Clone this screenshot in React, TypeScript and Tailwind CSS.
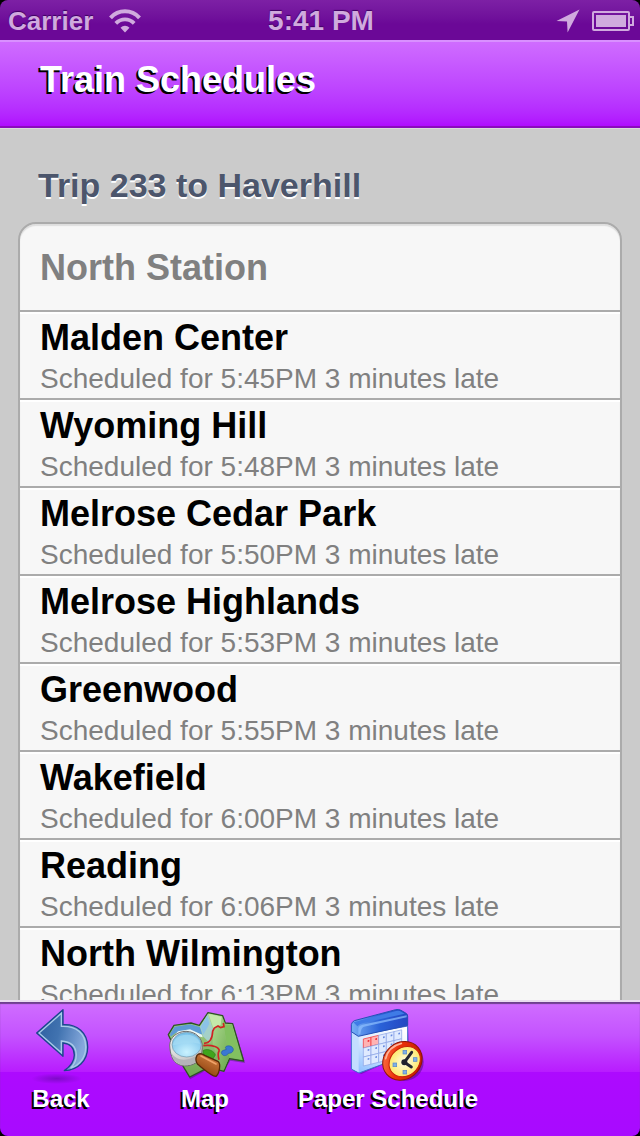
import React from "react";

type Stop = {
  name: string;
  time: string;
};

const stops: Stop[] = [
  { name: "Malden Center", time: "5:45PM" },
  { name: "Wyoming Hill", time: "5:48PM" },
  { name: "Melrose Cedar Park", time: "5:50PM" },
  { name: "Melrose Highlands", time: "5:53PM" },
  { name: "Greenwood", time: "5:55PM" },
  { name: "Wakefield", time: "6:00PM" },
  { name: "Reading", time: "6:06PM" },
  { name: "North Wilmington", time: "6:13PM" },
];

const WifiIcon = () => (
  <svg width="32" height="24" viewBox="0 0 32 24" fill="none" stroke="currentColor">
    <path d="M1.5 8.8C9.5 .2 22.5 .2 30.5 8.8" strokeWidth="4" />
    <path d="M6.8 14.4C12 9 20 9 25.2 14.4" strokeWidth="3.8" />
    <path d="M11.5 18.8C14 16 18 16 20.5 18.8L16 23.5Z" fill="currentColor" stroke="none" />
  </svg>
);

const LocationIcon = () => (
  <svg width="24" height="24" viewBox="0 0 24 24" fill="currentColor">
    <path d="M23.5 .5L11.6 23.5L11 12.5L.5 12Z" />
  </svg>
);

const BatteryIcon = () => (
  <svg width="42" height="20" viewBox="0 0 42 20" fill="none" stroke="currentColor" strokeWidth="2">
    <rect x="1" y="1" width="36" height="18" rx="1" />
    <rect x="4" y="4" width="30" height="12" fill="currentColor" stroke="none" />
    <path d="M38 6h3v8h-3" />
  </svg>
);

const BackIcon = () => (
  <svg width="80" height="80" viewBox="3 18 240 240" aria-hidden="true">
    <defs>
      <linearGradient id="arrowFill" x1="0" y1="0" x2="1" y2="0.3">
        <stop offset="0" stopColor="#2b5c9e" />
        <stop offset="0.5" stopColor="#4173b0" />
        <stop offset="1" stopColor="#86a9dc" />
      </linearGradient>
      <radialGradient id="arrowShade">
        <stop offset="0" stopColor="#5a0a9e" stopOpacity="0.55" />
        <stop offset="1" stopColor="#5a0a9e" stopOpacity="0" />
      </radialGradient>
    </defs>
    <ellipse cx="110" cy="236" rx="76" ry="16" fill="url(#arrowShade)" />
    <path
      d="M50 99L129 29V74C172 72 203 98 203 141C203 182 174 210 133 212C150 200 163 187 163 165C163 145 151 131 129 129V169Z"
      fill="url(#arrowFill)"
      stroke="#1c468c"
      strokeWidth="4"
      strokeLinejoin="round"
    />
    <path
      d="M57 99L124 40V79C170 77 197 101 197 141C197 172 179 196 152 204C163 193 169 181 169 164C168 140 152 125 124 123V158Z"
      fill="none"
      stroke="#a8cbe8"
      strokeWidth="4"
    />
  </svg>
);

const MapIcon = () => (
  <svg width="80" height="80" viewBox="45 18 240 240" aria-hidden="true">
    <defs>
      <linearGradient id="foldLight" x1="0" y1="0" x2="1" y2="1">
        <stop offset="0" stopColor="#b7e29a" />
        <stop offset="1" stopColor="#6aa84c" />
      </linearGradient>
      <linearGradient id="foldDark" x1="0" y1="0" x2="0" y2="1">
        <stop offset="0" stopColor="#a9d38d" />
        <stop offset="1" stopColor="#6fa850" />
      </linearGradient>
      <radialGradient id="lens" cx="0.5" cy="0.8" r="0.8">
        <stop offset="0" stopColor="#c9f2ff" />
        <stop offset="1" stopColor="#72bde8" />
      </radialGradient>
      <linearGradient id="rim" x1="0" y1="0" x2="1" y2="1">
        <stop offset="0" stopColor="#f4f4f4" />
        <stop offset="1" stopColor="#b5b5b5" />
      </linearGradient>
      <linearGradient id="grip" x1="1" y1="0" x2="0.5" y2="1">
        <stop offset="0" stopColor="#e08a4a" />
        <stop offset="1" stopColor="#8d420f" />
      </linearGradient>
    </defs>
    <path
      d="M58 106L74 76L124 70L148 77L174 40L218 48L226 69L250 72L284 185L240 178L222 205L176 202L119 234L104 200Z"
      fill="#30204a"
      opacity="0.4"
      transform="translate(1 4)"
    />
    <path
      d="M55 104L72 76L123 69L148 76L174 38L218 47L226 69L248 71L281 183L238 176L222 214L176 202L119 231L100 200Z"
      fill="url(#foldDark)"
      stroke="#2c5522"
      strokeWidth="4"
      strokeLinejoin="round"
    />
    <path d="M60 102L74 80L121 73L150 81L160 104L120 96L78 98L62 110Z" fill="#5d9bd5" />
    <path d="M72 108L84 94L120 88L156 104L158 112L120 104L90 100Z" fill="#eaf7f6" />
    <path d="M150 80L174 42L190 88L180 130L158 108Z" fill="#a4d0c8" />
    <path d="M152 80L172 46L178 72L160 104Z" fill="#8cc3e6" />
    <path d="M176 42L215 50L226 110L238 172L222 208L206 186L188 130L189 88Z" fill="url(#foldLight)" />
    <path d="M217 52L225 73L246 75L276 179L238 172L228 120Z" fill="#82c060" />
    <path d="M176 42L215 50L212 74L191 88Z" fill="#c4e9aa" />
    <path
      d="M162 130C180 130 187 118 188 94L193 84L204 78L212 83L222 80L220 69M160 137C184 133 212 142 207 154C202 161 205 172 207 179"
      fill="none"
      stroke="#cf2323"
      strokeWidth="5"
    />
    <path d="M160 151C174 144 194 154 196 165L188 178L160 164Z" fill="#40a51c" stroke="#2c7e18" strokeWidth="2" />
    <path
      d="M214 158C215 150 224 151 229 148L226 142C232 134 249 137 250 149C249 158 241 160 235 160C230 169 217 170 214 158Z"
      fill="#3b78d2"
      stroke="#245aa8"
      strokeWidth="2"
    />
    <path
      d="M59 135C60 112 82 94 108 94C138 95 158 114 157 143C156 158 154 168 148 180C136 194 108 204 85 193C66 184 60 160 59 135Z"
      fill="url(#rim)"
      stroke="#6e6e6e"
      strokeWidth="3"
    />
    <path d="M65 160C80 185 118 186 151 160L147 179C128 197 97 201 82 189C70 181 66 170 65 160Z" fill="#b4b4b8" />
    <ellipse cx="110" cy="134" rx="44" ry="37" fill="url(#lens)" stroke="#7595a8" strokeWidth="2" />
    <path d="M69 136C71 114 90 103 112 104C133 105 148 117 150 132C128 124 97 129 69 136Z" fill="#a5dcf4" opacity="0.7" />
    <path
      d="M141 166C147 159 156 161 164 166L205 185C213 192 208 222 198 229C188 231 162 208 143 193C137 185 137 174 141 166Z"
      fill="url(#grip)"
      stroke="#572908"
      strokeWidth="4"
    />
    <path d="M153 168L198 192" stroke="#f0a369" strokeWidth="5" strokeLinecap="round" />
  </svg>
);

const days = [0, 1, 2, 3, 4];
const weeks = [0, 1, 2];

const ScheduleIcon = () => (
  <svg width="80" height="80" viewBox="174 18 240 240" aria-hidden="true">
    <defs>
      <linearGradient id="sheet" x1="0.8" y1="0" x2="0.2" y2="1">
        <stop offset="0" stopColor="#ffffff" />
        <stop offset="0.5" stopColor="#d9eaff" />
        <stop offset="1" stopColor="#8fc0ff" />
      </linearGradient>
      <linearGradient id="binder" x1="0" y1="0" x2="1" y2="0">
        <stop offset="0" stopColor="#77b0f5" />
        <stop offset="0.5" stopColor="#2a62d8" />
        <stop offset="1" stopColor="#2447c2" />
      </linearGradient>
      <linearGradient id="clockRim" x1="0" y1="0" x2="1" y2="1">
        <stop offset="0" stopColor="#ff8a5c" />
        <stop offset="0.4" stopColor="#ee3109" />
        <stop offset="1" stopColor="#b91500" />
      </linearGradient>
      <radialGradient id="clockFace">
        <stop offset="0" stopColor="#fffde8" />
        <stop offset="1" stopColor="#ffe96b" />
      </radialGradient>
    </defs>
    <path d="M188 76L352 42L358 158L214 222L190 212Z" fill="#35106c" opacity="0.4" />
    <path
      d="M184 92L205 106L353 78V165L207 219L184 207Z"
      fill="url(#sheet)"
      stroke="#3f6bd0"
      strokeWidth="3"
      strokeLinejoin="round"
    />
    <path d="M186 96L206 108V217L186 206Z" fill="#c3deff" />
    <path
      d="M184 74Q185 66 193 62L317 29Q327 27 333 31L347 39Q353 42 353 49V76L205 109L184 95Z"
      fill="url(#binder)"
      stroke="#2450b5"
      strokeWidth="3"
      strokeLinejoin="round"
    />
    <path d="M190 67L318 33Q327 31 334 35L344 41L220 69Q209 72 202 79Z" fill="#3f7be6" />
    <path d="M205 104V84Q207 76 217 74L350 46V52L222 80Q213 83 211 102Z" fill="#8fc0ff" opacity="0.7" />
    <g transform="matrix(1 -.24 0 1 220 117)">
      {weeks.map((week) =>
        days.map((day) => (
          <g key={`${week}-${day}`}>
            <rect
              x={day * 23}
              y={week * 27}
              width="23"
              height="27"
              fill={week === 0 && day < 2 ? "#ffb3b3" : "#dfeaff"}
              stroke={week === 0 && day < 2 ? "#f12d32" : "#8ca4e5"}
              strokeWidth="2"
            />
            <rect
              x={day * 23 + 13}
              y={week * 27 + 7}
              width="5"
              height="5"
              fill={week === 0 && day < 2 ? "#ee222c" : "#6689e0"}
            />
          </g>
        ))
      )}
    </g>
    <ellipse cx="342" cy="186" rx="59" ry="57" fill="#3b0b66" opacity="0.45" />
    <g transform="rotate(-40 338 182)">
      <ellipse cx="337" cy="182" rx="62" ry="55" fill="url(#clockRim)" stroke="#8e1507" strokeWidth="3" />
      <ellipse cx="341" cy="188" rx="50" ry="42" fill="url(#clockFace)" stroke="#c42208" strokeWidth="3" />
    </g>
    <path d="M287 176Q295 140 334 130" fill="none" stroke="#ffb399" strokeWidth="5" strokeLinecap="round" />
    <g fill="#7fb0e8" stroke="#5686c5" strokeWidth="2">
      <rect x="339" y="151" width="11" height="11" />
      <rect x="370" y="173" width="11" height="11" />
      <rect x="339" y="211" width="11" height="11" />
      <rect x="309" y="189" width="11" height="11" />
    </g>
    <path
      d="M365 157L343 187L364 201"
      fill="none"
      stroke="#252634"
      strokeWidth="9"
      strokeLinecap="round"
      strokeLinejoin="round"
    />
    <circle cx="343" cy="187" r="9" fill="#20212e" />
  </svg>
);

const tabs = [
  { label: "Back", icon: <BackIcon />, width: "w-[122px]" },
  { label: "Map", icon: <MapIcon />, width: "w-[166px]" },
  { label: "Paper Schedule", icon: <ScheduleIcon />, width: "w-[200px]" },
];

const App = () => (
  <div className="flex h-screen flex-col overflow-hidden bg-black font-['Liberation_Sans',Arial,sans-serif]">
    <div className="grid h-10 shrink-0 grid-cols-[1fr_auto_1fr] items-center rounded-t-lg bg-linear-to-b from-[#7d20a5] via-[#6b0897] via-60% to-[#6b0897] pr-1.5 pl-2 text-[26px] font-bold text-[#d0aade] [text-shadow:0_-1px_1px_#3d0060]">
      <div className="flex items-center gap-4">
        <span>Carrier</span>
        <WifiIcon />
      </div>
      <span className="text-[28px]">5:41 PM</span>
      <div className="flex items-center justify-end gap-3">
        <LocationIcon />
        <BatteryIcon />
      </div>
    </div>

    <header className="flex h-[88px] shrink-0 items-center border-t-2 border-b-2 border-t-[#d990ff] border-b-[#8a0cbd] bg-linear-to-b from-[#cf6cff] via-[#c453ff] via-35% to-[#b00cff] px-10 pb-2">
      <h1 className="text-4xl font-bold text-white [text-shadow:-2px_2px_0_#000]">Train Schedules</h1>
    </header>

    <main className="min-h-0 flex-1 overflow-hidden border-t border-[#dcdcdc] bg-[#cbcbcb] px-[18px]">
      <h2 className="px-5 pt-9 pb-[17px] text-[34px] leading-10 font-bold text-[#4c566c] [text-shadow:0_2px_0_#fff]">
        Trip 233 to Haverhill
      </h2>
      <ul className="rounded-t-[18px] border-2 border-[#ababab] bg-[#f7f7f7] shadow-[inset_0_2px_1px_#dedede]">
        <li className="flex h-[86px] items-center px-5 pt-0.5">
          <h3 className="text-4xl font-bold text-[#808080]">North Station</h3>
        </li>
        {stops.map((stop) => (
          <li
            key={stop.name}
            className="h-[88px] border-t-2 border-[#ababab] px-5 pt-1 shadow-[inset_0_2px_0_#fff]"
          >
            <h3 className="text-4xl leading-11 font-bold text-black">{stop.name}</h3>
            <p className="text-[28px] leading-[38px] text-[#808080]">Scheduled for {stop.time} 3 minutes late</p>
          </li>
        ))}
      </ul>
    </main>

    <nav className="flex h-[136px] shrink-0 rounded-b-lg border-t-2 border-[#eadcf0] bg-[linear-gradient(#d06eff,#c453ff_25%,#b81cff_52%,#ad0aff_52%,#a80aff)] shadow-[inset_0_2px_1px_#6f3f8f]">
      {tabs.map((tab) => (
        <button key={tab.label} type="button" className={`flex flex-col items-center pt-1 ${tab.width}`}>
          {tab.icon}
          <span className="text-2xl leading-[26px] font-bold text-white [text-shadow:-2px_2px_0_#000]">
            {tab.label}
          </span>
        </button>
      ))}
    </nav>
  </div>
);

export default App;
